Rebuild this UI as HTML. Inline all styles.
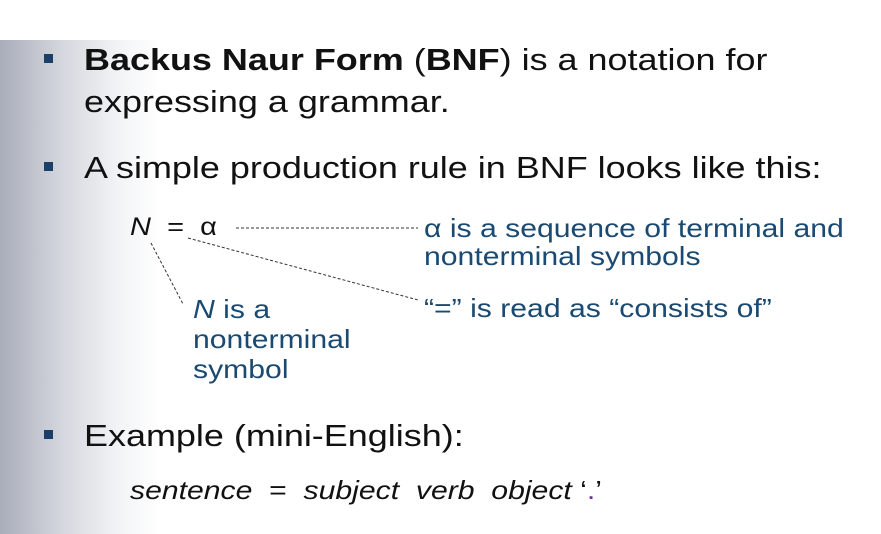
<!DOCTYPE html>
<html><head><style>
body{margin:0;width:881px;height:534px;overflow:hidden;background:#fff;position:relative;font-family:"Liberation Sans",Arial,sans-serif;}
.bg{position:absolute;left:0;top:40px;width:160px;height:494px;background:linear-gradient(to right,#a9adba 0%,#d6d8df 40%,#f3f4f6 75%,#fff 100%);}
.t{position:absolute;white-space:nowrap;color:#111;transform:scaleX(1.16);transform-origin:0 0;}
.m{font-size:31px;line-height:42px;}
.b{position:absolute;width:9px;height:9px;background:#1b3f66;}
.d{font-size:26px;line-height:28px;color:#1a4a72;}
i{font-style:italic}
</style></head><body>
<div class="bg"></div>
<div class="b" style="left:44px;top:54px"></div>
<div class="t m" style="left:84px;top:39px"><b>Backus Naur Form</b> (<b>BNF</b>) is a notation for<br>expressing a grammar.</div>
<div class="b" style="left:44px;top:162px"></div>
<div class="t m" style="left:84px;top:147px">A simple production rule in BNF looks like this:</div>
<div class="t" style="left:130px;top:215px;font-size:25px;line-height:25px"><i>N</i>&nbsp;&nbsp;=&nbsp;&nbsp;α</div>
<svg style="position:absolute;left:0;top:0" width="881" height="534">
<g stroke="#333" stroke-width="1" stroke-dasharray="3,2" fill="none">
<line x1="236" y1="228" x2="418" y2="228"/>
<line x1="188" y1="238" x2="418" y2="300"/>
<line x1="151" y1="243" x2="183" y2="304"/>
</g></svg>
<div class="t d" style="left:424px;top:214px">α is a sequence of terminal and<br>nonterminal symbols</div>
<div class="t d" style="left:424px;top:294px">“=” is read as “consists of”</div>
<div class="t d" style="left:193px;top:294px;line-height:30px"><i>N</i> is a<br>nonterminal<br>symbol</div>
<div class="b" style="left:44px;top:430px"></div>
<div class="t m" style="left:84px;top:415px">Example (mini-English):</div>
<div class="t" style="left:130px;top:477px;font-size:26px;line-height:26px"><i>sentence</i>&nbsp;&nbsp;=&nbsp;&nbsp;<i>subject&nbsp; verb&nbsp; object</i>&nbsp;‘<span style="color:#7030a0">.</span>’</div>
</body></html>
